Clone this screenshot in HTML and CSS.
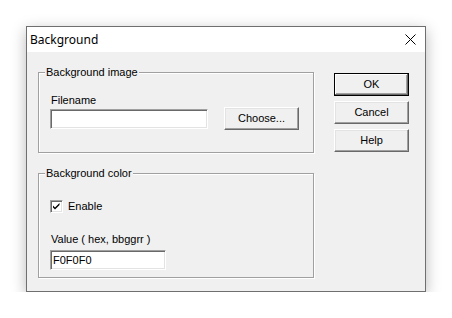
FILE: index.html
```html
<!DOCTYPE html>
<html>
<head>
<meta charset="utf-8">
<link rel="stylesheet" href="styles.css">
</head>
<body>
<div class="window">
  <div class="titlebar">
    <span class="title">Background</span>
    <svg class="close" width="11" height="11" viewBox="0 0 11 11"><path d="M0.5 0.5 L10.5 10.5 M10.5 0.5 L0.5 10.5" stroke="#000" stroke-width="1" fill="none"/></svg>
  </div>
  <div class="content">
    <div class="left">
      <div class="group group-image">
        <span class="legend">Background image</span>
        <div class="file-row">
          <div class="field">
            <span class="label">Filename</span>
            <div class="input input-file"></div>
          </div>
          <div class="button choose">Choose...</div>
        </div>
      </div>
      <div class="group group-color">
        <span class="legend">Background color</span>
        <div class="check-row">
          <span class="checkbox"><svg width="11" height="11" viewBox="0 0 11 11"><path d="M2 4.5 L4 6.5 L8.5 2 L8.5 4 L4 8.5 L2 6.5 Z" fill="#000"/></svg></span>
          <span class="check-label">Enable</span>
        </div>
        <span class="label value-label">Value ( hex, bbggrr )</span>
        <div class="input input-value">F0F0F0</div>
      </div>
    </div>
    <div class="right">
      <div class="button default">OK</div>
      <div class="button">Cancel</div>
      <div class="button">Help</div>
    </div>
  </div>
</div>
</body>
</html>
```
FILE: styles.css
```css
* { box-sizing: border-box; }
html, body { margin: 0; background: #fff; }
body {
  padding: 26px 0 0 26px;
  font-family: "Liberation Sans", Arial, sans-serif;
  font-size: 11px;
  line-height: 13px;
  color: #000;
}
.window {
  width: 400px;
  height: 266px;
  border: 1px solid #6f6f6f;
  background: #f0f0f0;
  box-shadow: 0 4px 14px rgba(0,0,0,0.28);
}
.titlebar {
  height: 25px;
  background: #fff;
  display: flex;
  align-items: center;
  justify-content: space-between;
  padding: 0 9px 0 3px;
}
.title {
  font-family: "Noto Sans", "Open Sans", sans-serif;
  font-size: 12px;
  line-height: 16px;
  color: #000;
}
.close { display: block; }
.content {
  display: flex;
  padding: 20px 0 0 11px;
}
.left { width: 277px; }
.group {
  position: relative;
  width: 276px;
  border: 1px solid #a0a0a0;
  box-shadow: 1px 1px 0 #fff, inset 1px 1px 0 #fff;
}
.group-image { height: 81px; padding: 21px 0 0 11px; }
.group-color { height: 105px; margin-top: 20px; padding: 26px 0 0 11px; }
.legend {
  position: absolute;
  top: -7px;
  left: 6px;
  padding: 0 1px;
  background: #f0f0f0;
  white-space: nowrap;
}
.file-row { display: flex; align-items: flex-start; }
.field { display: flex; flex-direction: column; }
.label { display: block; padding-left: 1px; white-space: nowrap; }
.input {
  background: #fff;
  border-style: solid;
  border-width: 1px;
  border-color: #a0a0a0 #fff #fff #a0a0a0;
  box-shadow: inset 1px 1px 0 #696969, inset -1px -1px 0 #e3e3e3;
  height: 20px;
}
.input-file { width: 158px; margin-top: 2px; }
.input-value {
  width: 116px;
  margin-top: 4px;
  padding: 3px 0 0 2px;
  line-height: 13px;
}
.button {
  width: 75px;
  height: 23px;
  display: flex;
  align-items: center;
  justify-content: center;
  background: #f0f0f0;
  border-style: solid;
  border-width: 1px;
  border-color: #fff #696969 #696969 #fff;
  box-shadow: inset -1px -1px 0 #a0a0a0, inset 1px 1px 0 #e3e3e3;
  padding-bottom: 1px;
}
.choose { margin: 13px 0 0 16px; }
.right {
  margin-left: 19px;
  margin-top: 1px;
  display: flex;
  flex-direction: column;
  gap: 5px;
}
.button.default {
  border: 1px solid #000;
  box-shadow: inset -1px -1px 0 #696969, inset 1px 1px 0 #fff, inset -2px -2px 0 #a0a0a0;
}
.check-row { display: flex; align-items: center; height: 13px; }
.checkbox {
  width: 13px;
  height: 13px;
  background: #fff;
  border-style: solid;
  border-width: 1px;
  border-color: #a0a0a0 #fff #fff #a0a0a0;
  box-shadow: inset 1px 1px 0 #696969, inset -1px -1px 0 #e3e3e3;
  display: flex;
  align-items: center;
  justify-content: center;
}
.checkbox svg { display: block; }
.check-label { margin-left: 5px; }
.value-label { margin-top: 20px; }
```
